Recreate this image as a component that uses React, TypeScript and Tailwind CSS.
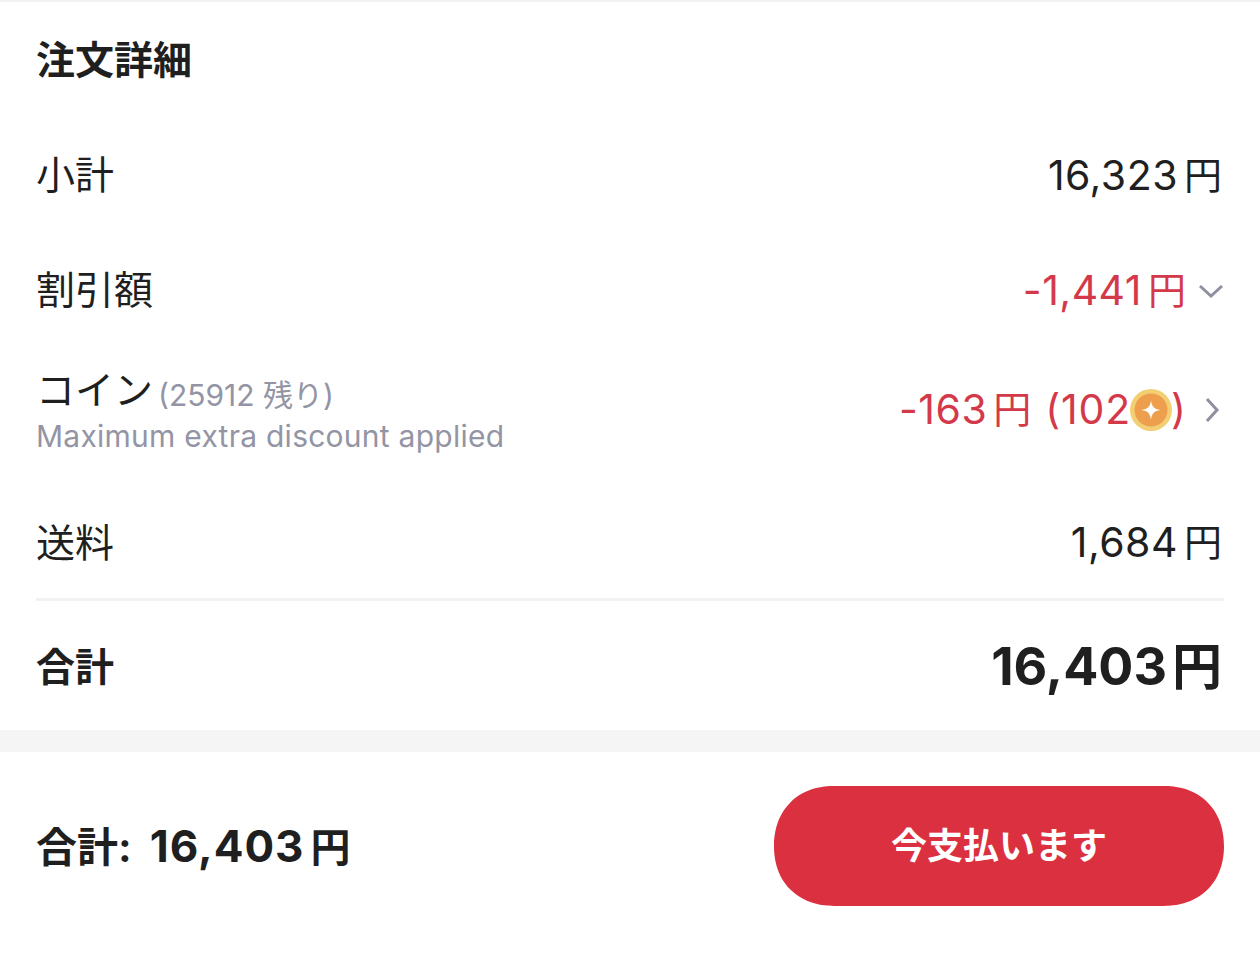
const Amount = ({ value }: { value: string }) => (
  <span className="flex items-center mr-[2px] pb-[2px]">
    <span className="text-[41px] tracking-[0.5px] leading-[48px]">{value}</span>
    <span className="text-[38px] ml-[6px] leading-[48px]">円</span>
  </span>
);

const Coin = () => (
  <svg width="42" height="42" viewBox="0 0 42 42" className="-mx-[1px]">
    <circle cx="21" cy="21" r="21" fill="#f3cf74" />
    <circle cx="21" cy="21" r="16.5" fill="#ee9f4e" />
    <path d="M21 11.5 C22 18 24 20 30.5 21 C24 22 22 24 21 30.5 C20 24 18 22 11.5 21 C18 20 20 18 21 11.5 Z" fill="#fff" />
  </svg>
);

export default function App() {
  return (
    <div className="w-[1260px] h-[968px] bg-white overflow-hidden font-['Inter','Noto_Sans_CJK_JP',sans-serif] border-t-2 border-[#f2f2f2]">
      <div className="px-9 h-[728px] flex flex-col">
        <h1 className="h-[116px] flex items-center text-[39px] font-semibold text-[#1f1f1f]">注文詳細</h1>
        <div className="flex items-center justify-between h-[115px] text-[39px] text-[#1f1f1f]">
          <span>小計</span>
          <Amount value="16,323" />
        </div>
        <div className="flex items-center justify-between h-[115px] text-[39px] text-[#1f1f1f]">
          <span>割引額</span>
          <span className="flex items-center gap-[10px] text-[#d4394a]">
            <Amount value="-1,441" />
            <svg width="26" height="16" viewBox="0 0 26 16" fill="none" stroke="#8e8f9f" strokeWidth="3">
              <path d="M2 3 L13 13 L24 3" />
            </svg>
          </span>
        </div>
        <div className="flex items-center justify-between h-[124px]">
          <div className="flex flex-col">
            <div className="flex items-start gap-[5px] h-[46px]">
              <span className="text-[39px] text-[#1f1f1f] leading-[46px]">コイン</span>
              <span className="mt-[5px] text-[30px] text-[#9394a4] leading-[46px]">(25912 残り)</span>
            </div>
            <span className="mt-[5px] text-[30px] text-[#9394a4] leading-[36px] tracking-[0.25px]">Maximum extra discount applied</span>
          </div>
          <span className="flex items-center text-[41px] text-[#d4394a]">
            <span className="-mr-[2px]">
              <Amount value="-163" />
            </span>
            <span className="ml-[14px] tracking-[0.8px]">(102</span>
            <Coin />
            )
            <svg width="16" height="26" viewBox="0 0 16 26" fill="none" stroke="#8e8f9f" strokeWidth="3" className="ml-[18px] mr-[4px]">
              <path d="M3 2 L13 13 L3 24" />
            </svg>
          </span>
        </div>
        <div className="flex items-center justify-between h-[126px] pt-[16px] text-[39px] text-[#1f1f1f]">
          <span>送料</span>
          <Amount value="1,684" />
        </div>
        <div className="h-[3px] bg-[#f2f2f2]" />
        <div className="flex items-center justify-between h-[129px] pt-[3px] text-[#1f1f1f] font-bold">
          <span className="text-[39px]">合計</span>
          <span className="flex items-baseline mr-[2px]">
            <span className="text-[52px]">16,403</span>
            <span className="text-[50px] ml-[5px]">円</span>
          </span>
        </div>
      </div>
      <div className="h-[22px] bg-[#f5f5f5]" />
      <div className="flex items-center justify-between px-9 h-[188px] text-[#1f1f1f] font-bold">
        <span className="flex items-baseline">
          <span className="text-[41px]">合計:</span>
          <span className="text-[44px] tracking-[1px] ml-[18px]">16,403</span>
          <span className="text-[40px] ml-[6px]">円</span>
        </span>
        <button className="w-[450px] h-[120px] rounded-[60px] [corner-shape:superellipse(1.12)] bg-[#db303f] text-white text-[36px] font-semibold">今支払います</button>
      </div>
    </div>
  );
}
